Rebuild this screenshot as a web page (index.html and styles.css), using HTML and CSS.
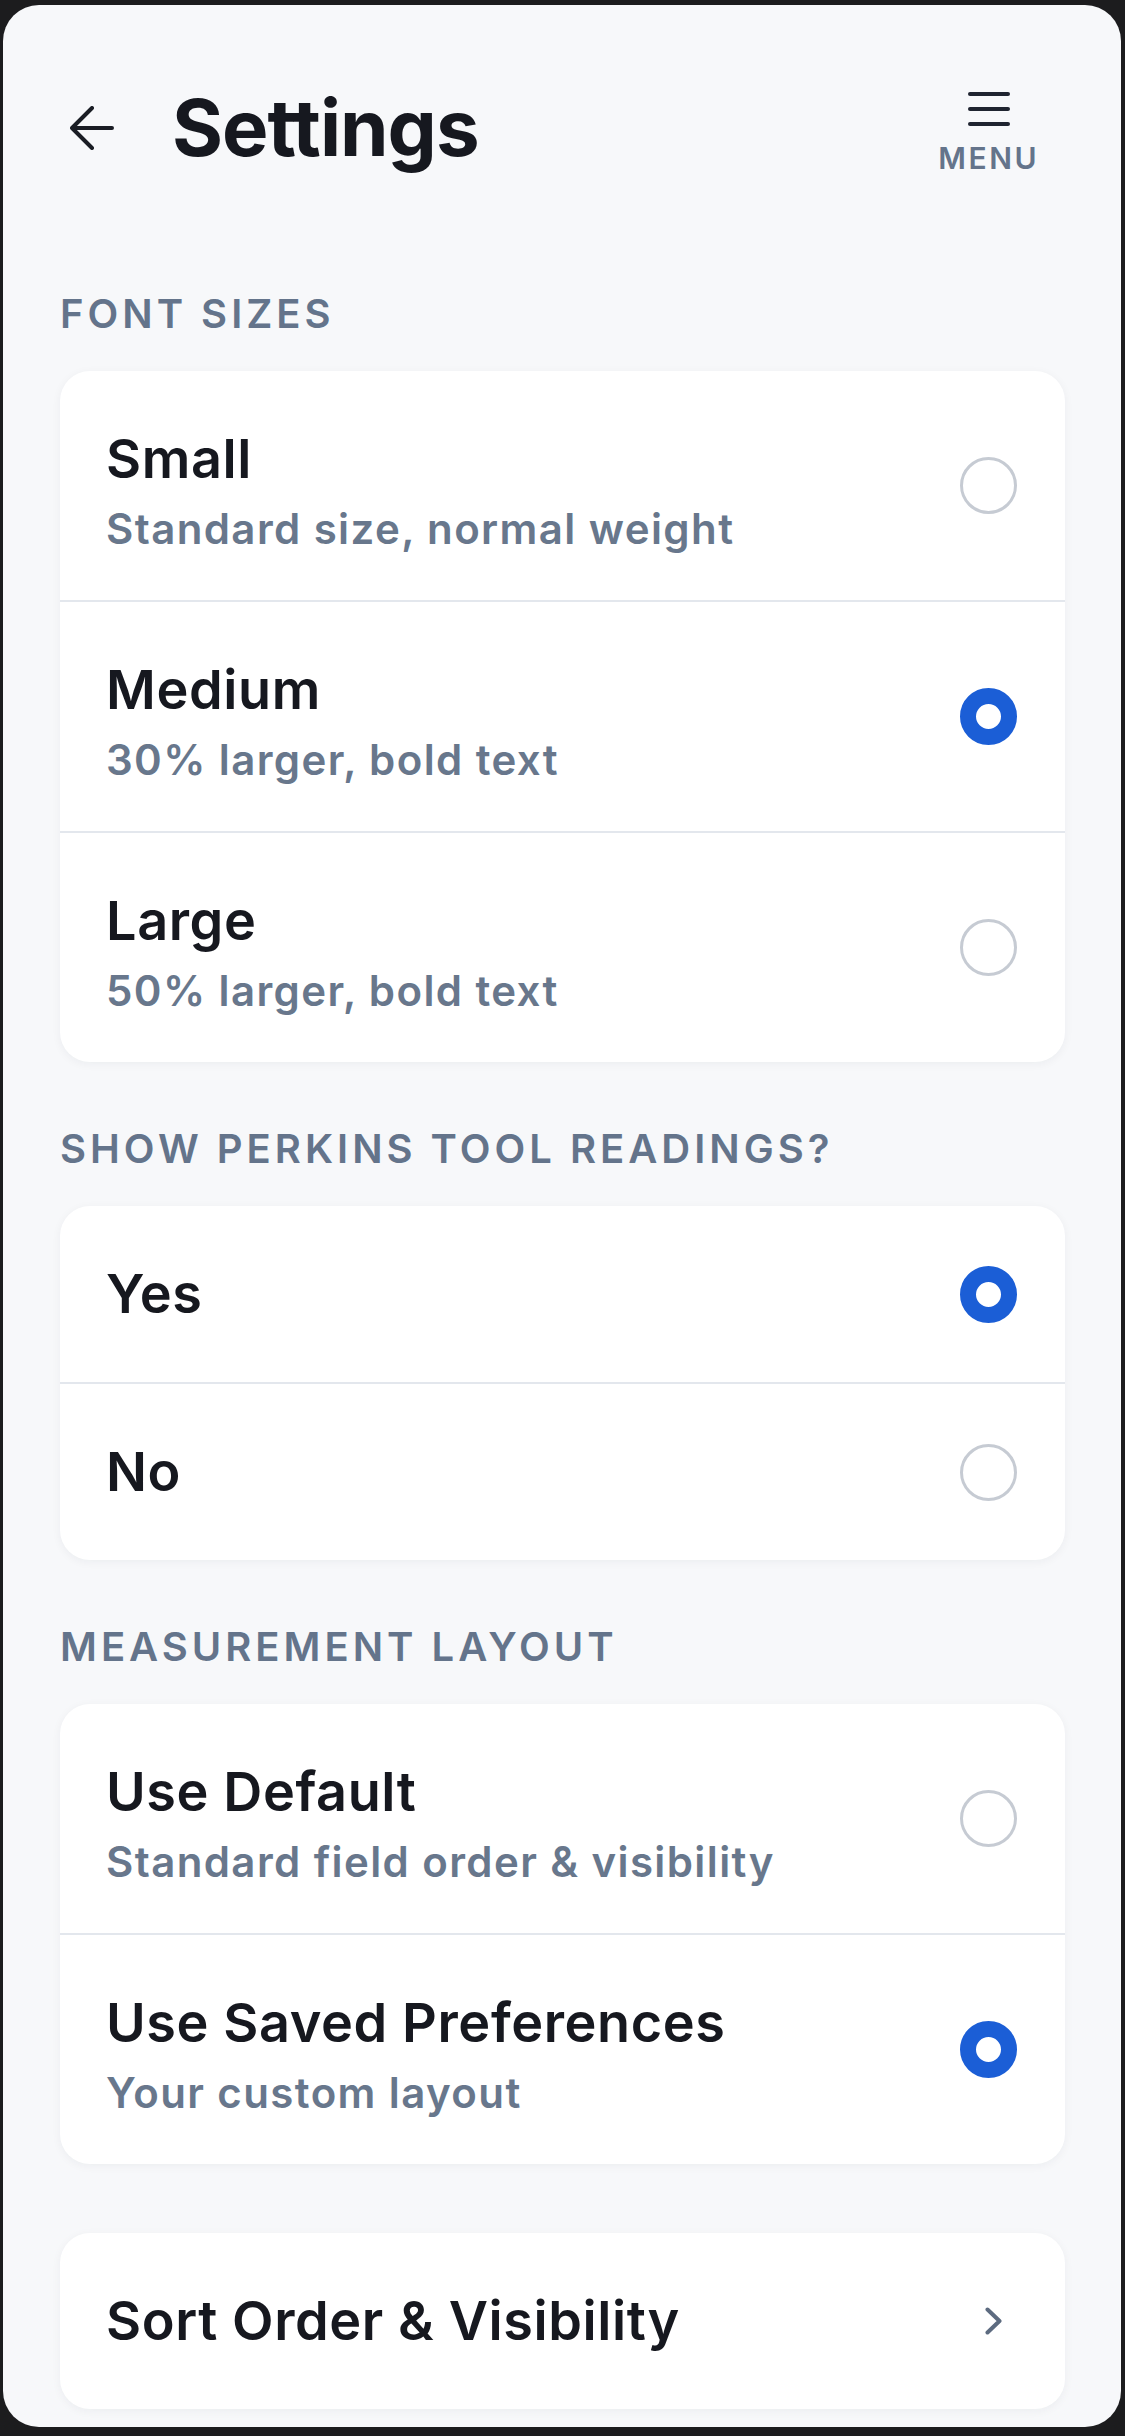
FILE: index.html
```html
<!DOCTYPE html>
<html lang="en">
<head>
	<meta charset="UTF-8">
	<title>Settings</title>
	<link rel="stylesheet" href="styles.css">
</head>
<body>
	<div class="phone">
		<div class="header">
			<div class="back">
				<svg width="44" height="44" viewBox="0 0 44 44"><path d="M42 22H3M22 2L2 22l20 20" fill="none" stroke="#1a1d24" stroke-width="4" stroke-linecap="round" stroke-linejoin="round"/></svg>
			</div>
			<h1 class="title">Settings</h1>
			<div class="menu">
				<div class="burger"><span></span><span></span><span></span></div>
				<div class="menu-text">MENU</div>
			</div>
		</div>

		<div class="section first">
			<div class="label">FONT SIZES</div>
			<div class="card">
				<div class="row">
					<div class="text">
						<div class="name">Small</div>
						<div class="desc">Standard size, normal weight</div>
					</div>
					<div class="radio"></div>
				</div>
				<div class="row">
					<div class="text">
						<div class="name">Medium</div>
						<div class="desc">30% larger, bold text</div>
					</div>
					<div class="radio on"></div>
				</div>
				<div class="row">
					<div class="text">
						<div class="name">Large</div>
						<div class="desc">50% larger, bold text</div>
					</div>
					<div class="radio"></div>
				</div>
			</div>
		</div>

		<div class="section">
			<div class="label">SHOW PERKINS TOOL READINGS?</div>
			<div class="card">
				<div class="row">
					<div class="text">
						<div class="name">Yes</div>
					</div>
					<div class="radio on"></div>
				</div>
				<div class="row">
					<div class="text">
						<div class="name">No</div>
					</div>
					<div class="radio"></div>
				</div>
			</div>
		</div>

		<div class="section">
			<div class="label">MEASUREMENT LAYOUT</div>
			<div class="card">
				<div class="row">
					<div class="text">
						<div class="name">Use Default</div>
						<div class="desc">Standard field order &amp; visibility</div>
					</div>
					<div class="radio"></div>
				</div>
				<div class="row">
					<div class="text">
						<div class="name">Use Saved Preferences</div>
						<div class="desc">Your custom layout</div>
					</div>
					<div class="radio on"></div>
				</div>
			</div>
			<div class="card link">
				<div class="row">
					<div class="text">
						<div class="name">Sort Order &amp; Visibility</div>
					</div>
					<svg class="chev" width="17" height="28" viewBox="0 0 17 28"><path d="M2.5 2.5L14.5 14 2.5 25.5" fill="none" stroke="#5d6b80" stroke-width="4" stroke-linecap="round" stroke-linejoin="round"/></svg>
				</div>
			</div>
		</div>
	</div>
</body>
</html>
```

FILE: styles.css
```css
/*common*/
*{
	margin: 0;
	padding: 0;
	box-sizing: border-box;
}
body{
	background-color: #1c1c1e;
	font-family: Inter, "Noto Sans", sans-serif;
}
.phone{
	height: 2422px;
	margin: 5px 4px 9px 3px;
	border-radius: 36px;
	overflow: hidden;
	background-color: #f7f8fa;
	padding: 0 56px 0 57px;
}

/*header*/
.header{
	display: flex;
	align-items: center;
	padding-top: 74px;
}
.back{
	width: 44px;
	height: 44px;
	margin-left: 10px;
	margin-right: 58px;
	display: flex;
}
.title{
	flex: 1;
	font-size: 78px;
	line-height: 94px;
	font-weight: 700;
	letter-spacing: -1px;
	color: #16181f;
}
.menu{
	display: flex;
	flex-direction: column;
	align-items: center;
	margin-right: 26px;
	margin-top: 13px;
}
.burger{
	width: 42px;
	display: flex;
	flex-direction: column;
	gap: 11px;
}
.burger span{
	display: block;
	height: 4px;
	border-radius: 2px;
	background-color: #1f2430;
}
.menu-text{
	margin-top: 14px;
	font-size: 30px;
	line-height: 36px;
	font-weight: 600;
	letter-spacing: 2.5px;
	color: #64748b;
}

/*sections*/
.section{
	margin-top: 63px;
}
.section.first{
	margin-top: 114px;
}
.label{
	font-size: 40px;
	line-height: 48px;
	font-weight: 600;
	letter-spacing: 4px;
	color: #64748b;
	margin-bottom: 33px;
}
.card{
	background-color: #fff;
	border-radius: 30px;
	box-shadow: 0 2px 10px rgba(20, 30, 50, 0.05);
	overflow: hidden;
}
.card.link{
	margin-top: 69px;
}
.row{
	display: flex;
	align-items: center;
	padding: 56px 48px 56px 46px;
	border-top: 2px solid #e3e7ed;
}
.row:first-child{
	border-top: none;
}
.text{
	flex: 1;
}
.name{
	font-size: 54px;
	line-height: 64px;
	font-weight: 600;
	letter-spacing: 0.6px;
	color: #16181f;
}
.desc{
	margin-top: 13px;
	margin-bottom: -10px;
	font-size: 42px;
	line-height: 50px;
	font-weight: 600;
	letter-spacing: 1.4px;
	color: #68778c;
}

/*radio*/
.radio{
	width: 57px;
	height: 57px;
	border-radius: 50%;
	border: 3px solid #c6cbd3;
	background-color: #fff;
}
.radio.on{
	border: 16px solid #1b5ed6;
}
.chev{
	margin-right: 15px;
}
```
